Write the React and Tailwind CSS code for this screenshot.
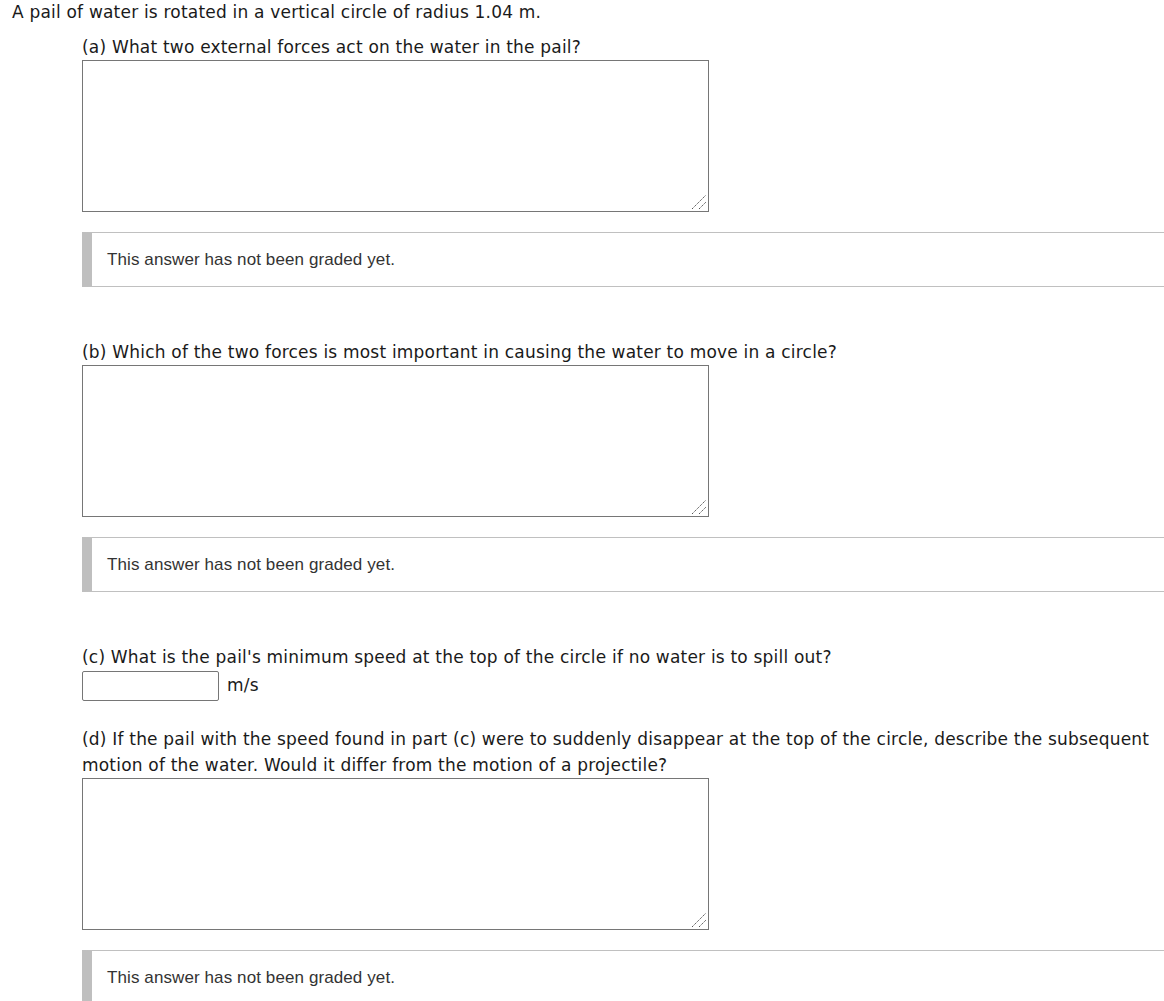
const parts = [
  { label: "(a) What two external forces act on the water in the pail?", type: "essay" },
  { label: "(b) Which of the two forces is most important in causing the water to move in a circle?", type: "essay" },
  { label: "(c) What is the pail's minimum speed at the top of the circle if no water is to spill out?", type: "number", unit: "m/s" },
  {
    label: "(d) If the pail with the speed found in part (c) were to suddenly disappear at the top of the circle, describe the subsequent motion of the water. Would it differ from the motion of a projectile?",
    type: "essay",
  },
];

function Feedback() {
  return (
    <div className="mt-[20px] flex h-[55px] items-center border-y border-[#c0c0c0] border-l-[10px] border-l-[#bfbfbf] pl-[15px] font-['Liberation_Sans',Arial,sans-serif] text-[17px] tracking-[0.1px] text-[#333]">
      This answer has not been graded yet.
    </div>
  );
}

function Essay() {
  return (
    <div className="relative h-[152px] w-[627px]">
      <textarea className="block h-full w-full resize-none border border-[#767676] bg-white p-1 outline-none" />
      {/* resize grip */}
      <svg width="18" height="18" viewBox="0 0 18 18" className="pointer-events-none absolute bottom-[1px] right-[1px]">
        <path d="M2 16 L16 2" stroke="#555" strokeWidth="1" strokeDasharray="1.4 0.8" />
        <path d="M9 16 L16 9" stroke="#555" strokeWidth="1" strokeDasharray="1.4 0.8" />
      </svg>
    </div>
  );
}

function Part({ part, index }) {
  const prevEssay = index > 0 && parts[index - 1].type === "essay";
  return (
    <div className={index === 0 ? "mt-[10px]" : prevEssay ? "mt-[52px]" : "mt-[25px]"}>
      <p className="leading-[26px]">{part.label}</p>
      {part.type === "essay" ? (
        <>
          <Essay />
          <Feedback />
        </>
      ) : (
        <div className="flex items-center gap-[8px] pt-[1px]">
          <input type="text" className="h-[30px] w-[137px] rounded-[2px] border border-[#767676] px-1 outline-none" />
          <span>{part.unit}</span>
        </div>
      )}
    </div>
  );
}

export default function App() {
  return (
    <div className="min-h-screen bg-white font-['DejaVu_Sans',Verdana,sans-serif] text-[17px] tracking-[0.2px] text-[#1a1a1a]">
      <p className="pl-[12px] leading-[24px]">A pail of water is rotated in a vertical circle of radius 1.04 m.</p>
      <div className="pl-[82px]">
        {parts.map((part, i) => (
          <Part key={i} part={part} index={i} />
        ))}
      </div>
    </div>
  );
}
